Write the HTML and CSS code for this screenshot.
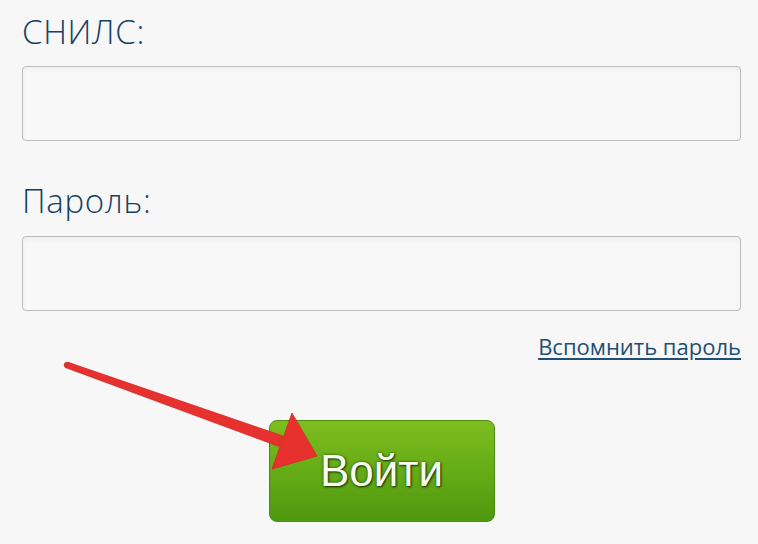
FILE: index.html
```html
<!DOCTYPE html>
<html lang="ru">
<head>
    <meta charset="UTF-8">
    <meta name="viewport" content="width=device-width, initial-scale=1.0">
    <title>Вход</title>
    <link rel="stylesheet" href="styles.css">
</head>
<body>
<main class="login">
    <form class="login-form" onsubmit="return false">
        <label class="field">
            <span class="field-label">СНИЛС:</span>
            <input type="text" class="field-input">
        </label>
        <label class="field field-password">
            <span class="field-label">Пароль:</span>
            <input type="password" class="field-input">
        </label>
        <div class="remind">
            <a href="#" class="remind-link">Вспомнить пароль</a>
        </div>
        <div class="actions">
            <button type="submit" class="login-button">Войти</button>
        </div>
    </form>
    <svg class="pointer" width="758" height="544" viewBox="0 0 758 544">
        <g fill="#e6312e" stroke="#d42a27" stroke-width="0.8" stroke-linejoin="round">
            <circle cx="67" cy="365" r="2.8"/>
            <polygon points="68,362.3 283,436 279,446.5 66,367.7"/>
            <polygon points="292,413 317,456 272,469"/>
        </g>
    </svg>
</main>
</body>
</html>
```

FILE: styles.css
```css
html, body {
    margin: 0;
    background: #f7f7f7;
}
.login {
    position: relative;
    width: 758px;
    height: 544px;
    overflow: hidden;
}
.login-form {
    display: flex;
    flex-direction: column;
    width: 719px;
    padding: 12px 0 0 22px;
    margin: 0;
}
.field {
    display: flex;
    flex-direction: column;
}
.field-password {
    margin-top: 40px;
}
.field-label {
    font-family: "Open Sans", "Noto Sans", sans-serif;
    font-size: 33px;
    font-weight: 300;
    letter-spacing: 0.7px;
    line-height: 40px;
    color: #173f62;
    margin-bottom: 14px;
}
.field-password .field-label {
    margin-bottom: 15px;
}
.field-input {
    box-sizing: border-box;
    height: 75px;
    margin: 0;
    border: 1px solid #bdbdbd;
    border-radius: 4px;
    background: #f8f8f8;
    box-shadow: inset 0 3px 4px rgba(0, 0, 0, 0.04);
    font-size: 24px;
    padding: 0 12px;
}
.remind {
    display: flex;
    justify-content: flex-end;
    margin-top: 20px;
}
.remind-link {
    font-family: "Open Sans", "Noto Sans", sans-serif;
    font-size: 22px;
    line-height: 30px;
    color: #1f4f72;
    text-decoration: underline;
    text-underline-offset: 3px;
}
.actions {
    display: flex;
    justify-content: center;
    margin-top: 59px;
}
.login-button {
    width: 226px;
    height: 102px;
    border: 1px solid #4d8c12;
    border-radius: 8px;
    background: linear-gradient(#7dbd1f, #63aa16 55%, #4f980f);
    color: #f8fdec;
    font-family: "Liberation Sans", Arial, sans-serif;
    font-size: 44px;
    text-shadow: 1px 1px 2px rgba(20, 50, 0, 0.95), 0 0 3px rgba(20, 50, 0, 0.7);
    cursor: pointer;
}
.pointer {
    position: absolute;
    left: 0;
    top: 0;
    pointer-events: none;
}
```
